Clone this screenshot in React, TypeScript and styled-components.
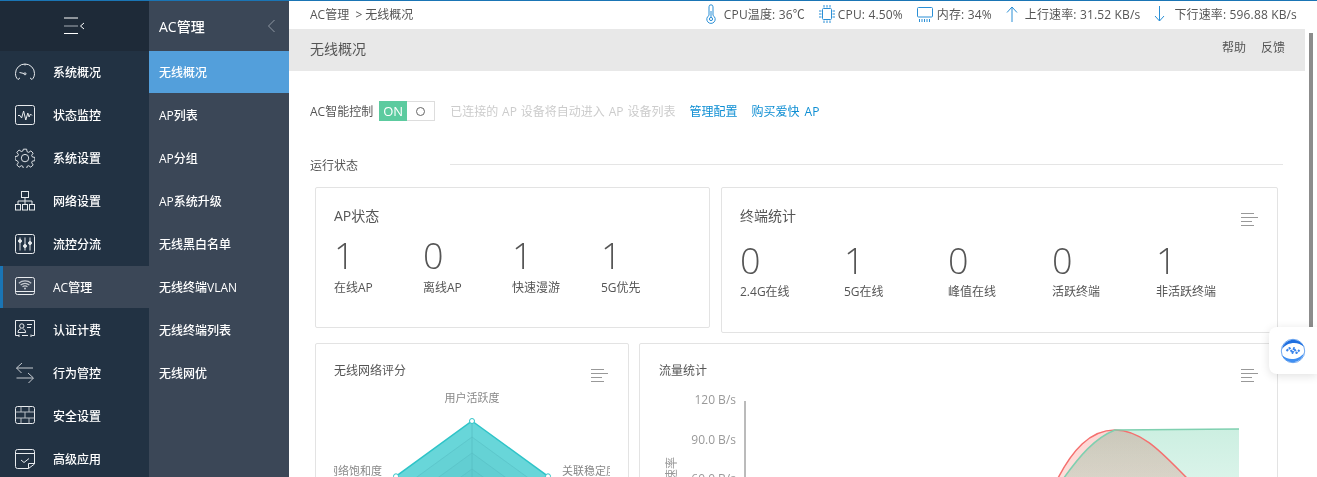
import React from 'react';
import styled, { createGlobalStyle } from 'styled-components';

const GlobalStyle = createGlobalStyle`
	html, body {
		margin: 0;
		padding: 0;
		height: 100%;
		background: #fff;
		overflow: hidden;
	}
	* {
		box-sizing: border-box;
	}
	body {
		font-family: "Open Sans", "Noto Sans CJK SC", sans-serif;
		font-size: 12px;
		color: #555;
	}
`;

const Page = styled.div`
	position: relative;
	display: flex;
	width: 1317px;
	height: 477px;
	overflow: hidden;
	border-top: 1px solid #1a75b5;
`;

const Rail = styled.aside`
	flex: 0 0 149px;
	background: #223243;
`;

const RailHead = styled.div`
	display: flex;
	justify-content: center;
	align-items: center;
	height: 50px;
	background: #1e2a38;
`;

const NavList = styled.nav`
	display: flex;
	flex-direction: column;
	gap: 1px;
`;

const NavItem = styled.div<{ $active?: boolean }>`
	display: flex;
	align-items: center;
	gap: 18px;
	height: 42px;
	padding-left: ${(p) => (p.$active ? '12px' : '15px')};
	color: #fff;
	font-weight: 500;
	background: ${(p) => (p.$active ? '#3b4757' : 'transparent')};
	border-left: ${(p) => (p.$active ? '3px solid #1a75b5' : '0')};
`;

const SubRail = styled.aside`
	flex: 0 0 140px;
	background: #3b4757;
`;

const SubHead = styled.div`
	display: flex;
	justify-content: space-between;
	align-items: center;
	height: 50px;
	padding: 0 10px;
	color: #fff;
	font-size: 14px;
	font-weight: 500;
`;

const SubItem = styled.div<{ $active?: boolean }>`
	display: flex;
	align-items: center;
	height: 42px;
	padding-left: 10px;
	color: #fff;
	font-weight: 500;
	background: ${(p) => (p.$active ? '#539fdb' : 'transparent')};
`;

const Main = styled.main`
	flex: 1;
	min-width: 0;
`;

const TopBar = styled.header`
	display: flex;
	justify-content: space-between;
	align-items: center;
	height: 28px;
	padding: 0 20px 2px 21px;
`;

const Stats = styled.div`
	display: flex;
	align-items: center;
`;

const Stat = styled.span<{ $gap: number }>`
	display: flex;
	align-items: center;
	gap: ${(p) => p.$gap}px;
	margin-left: 14px;
	letter-spacing: 0.15px;
	white-space: nowrap;
`;

const TitleBar = styled.div`
	display: flex;
	justify-content: space-between;
	align-items: center;
	width: 1016px;
	height: 42px;
	padding: 0 20px 5px 21px;
	background: #e8e8e8;
	font-size: 14px;
`;

const TitleLinks = styled.div`
	display: flex;
	gap: 15px;
	margin-bottom: 2px;
	font-size: 12px;
`;

const Content = styled.div`
	padding: 30px 0 0 21px;
	width: 1016px;
`;

const ControlRow = styled.div`
	display: flex;
	align-items: center;
	height: 20px;
`;

const Toggle = styled.div`
	display: flex;
	width: 56px;
	height: 20px;
	margin: 0 15px 0 6px;
	border: 1px solid #ddd;
`;

const ToggleOn = styled.span`
	display: flex;
	justify-content: center;
	align-items: center;
	width: 28px;
	margin: -1px 0 -1px -1px;
	color: #fff;
	font-size: 13px;
	background: #5ccb9f;
`;

const ToggleOff = styled.span`
	flex: 1;
	display: flex;
	justify-content: center;
	align-items: center;
`;

const ToggleDot = styled.i`
	width: 9px;
	height: 9px;
	border: 1px solid #666;
	border-radius: 50%;
`;

const Hint = styled.span`
	margin-right: 14px;
	color: #ccc;
	word-spacing: 0.8px;
`;

const Link = styled.a`
	margin-right: 14px;
	color: #0e8ed3;
	word-spacing: 2px;
`;

const Section = styled.div`
	display: flex;
	align-items: center;
	height: 16px;
	margin-top: 36px;
	width: 973px;
`;

const SectionRule = styled.div`
	flex: 1;
	height: 1px;
	margin: -2px 0 0 92px;
	background: #e5e5e5;
`;

const CardRow = styled.div<{ $top: number; $gap: number }>`
	display: flex;
	align-items: flex-start;
	gap: ${(p) => p.$gap}px;
	margin: ${(p) => p.$top}px 0 0 5px;
`;

const Card = styled.section<{ $w: number; $h: number; $pl?: number; $pr?: number }>`
	flex: 0 0 ${(p) => p.$w}px;
	min-width: 0;
	height: ${(p) => p.$h}px;
	padding: 0 ${(p) => p.$pr ?? 19}px 0 ${(p) => p.$pl ?? 18}px;
	border: 1px solid #e3e3e3;
	border-radius: 2px;
`;

const CardHead = styled.div<{ $top: number; $px?: number }>`
	display: flex;
	justify-content: space-between;
	align-items: flex-start;
	padding: ${(p) => p.$top}px ${(p) => p.$px ?? 0}px 0;
`;

const CardTitle = styled.h3<{ $size: number }>`
	margin: 0;
	font-size: ${(p) => p.$size}px;
	font-weight: 400;
	line-height: 16px;
	color: #555;
`;

const StatRow = styled.div<{ $top: number }>`
	display: flex;
	margin-top: ${(p) => p.$top}px;
`;

const StatCol = styled.div<{ $w: number }>`
	flex: 0 0 ${(p) => p.$w}px;
`;

const StatNum = styled.div`
	font-size: 36px;
	font-weight: 300;
	line-height: 40px;
	color: #555;
`;

const StatLabel = styled.div<{ $top: number }>`
	margin-top: ${(p) => p.$top}px;
	line-height: 16px;
`;

const MenuIconWrap = styled.svg<{ $top: number }>`
	display: block;
	margin-top: ${(p) => p.$top}px;
`;

const ChartSvg = styled.svg`
	display: block;
	margin-top: 8px;
`;

const RedArea = styled.path`
	mix-blend-mode: multiply;
`;

const Scrollbar = styled.div`
	position: absolute;
	top: 32px;
	left: 1309px;
	width: 4px;
	height: 310px;
	background: #8c8c8c;
`;

const FloatButton = styled.div`
	position: absolute;
	top: 326px;
	left: 1269px;
	display: flex;
	justify-content: center;
	align-items: center;
	width: 48px;
	height: 47px;
	background: #fff;
	border-radius: 8px 0 0 8px;
	box-shadow: 0 2px 10px rgba(0, 0, 0, 0.12);
`;

type IconProps = { children: React.ReactNode };

const NavIcon = ({ children }: IconProps) => (
	<svg width="20" height="20" viewBox="0 0 20 20" fill="none" stroke="#e8ebee" strokeWidth="1" style={{ flex: 'none' }}>
		{children}
	</svg>
);

const icons: Record<string, React.ReactNode> = {
	gauge: (
		<>
			<path d="M3 17.5C1.2 16 .5 13.8.5 11.5a9.5 9.5 0 0 1 19 0c0 2.3-.8 4.5-2.5 6" />
			<path d="M4.5 10.5l4.5 1" />
			<circle cx="10" cy="11.8" r="1" />
			<path d="M3 17.5l2-1.6M17 17.5l-2-1.6M10 2v1.5" />
		</>
	),
	pulse: (
		<>
			<rect x=".5" y=".5" width="19" height="19" rx="2" />
			<path d="M3 10.5h2l1.6 2.5 2-7 2.2 9 2-7 1.3 4 1.4-3 1.5 1.5" />
		</>
	),
	gear: (
		<path d="M8.3.7h3.4l.5 2.7 1.7.7 2.3-1.6 2.4 2.4-1.6 2.3.7 1.7 2.7.5v3.4l-2.7.5-.7 1.7 1.6 2.3-2.4 2.4-2.3-1.6-1.7.7-.5 2.7H8.3l-.5-2.7-1.7-.7-2.3 1.6-2.4-2.4 1.6-2.3-.7-1.7L-.4 11.9V8.5l2.7-.5.7-1.7L1.4 4l2.4-2.4 2.3 1.6 1.7-.7zM10 6.2a3.9 3.9 0 1 0 0 7.8 3.9 3.9 0 0 0 0-7.8z" transform="translate(.5 .5) scale(.95)" />
	),
	network: (
		<>
			<rect x="6.5" y=".5" width="7" height="6" />
			<rect x=".5" y="13.5" width="5" height="5.5" />
			<rect x="7.5" y="13.5" width="5" height="5.5" />
			<rect x="14.5" y="13.5" width="5" height="5.5" />
			<path d="M10 6.5v7M3 13.5V10h14v3.5" />
		</>
	),
	sliders: (
		<>
			<rect x=".5" y=".5" width="19" height="19" rx="2" />
			<path d="M5 3.5v13M10 3.5v13M15 3.5v13" strokeWidth="1.4" stroke="#a9b0b8" />
			<circle cx="5" cy="7" r="1.5" fill="#e8ebee" />
			<circle cx="10" cy="12" r="1.5" fill="#e8ebee" />
			<circle cx="15" cy="9" r="1.5" fill="#e8ebee" />
		</>
	),
	wifi: (
		<>
			<rect x=".5" y=".5" width="19" height="17" rx="2" />
			<path d="M.5 14.5h19" />
			<path d="M3.8 6.2c3.6-3 8.8-3 12.4 0M5.6 8c2.6-2 6.2-2 8.8 0M7.5 9.8c1.5-1 3.5-1 5 0" strokeWidth="1.2" stroke="#c6cbd1" />
			<circle cx="10" cy="11.6" r="1" fill="#c6cbd1" stroke="none" />
		</>
	),
	badge: (
		<>
			<path d="M.5 15.5V.5h19v15h-3M13 15.5H7M4 15.5H.5M4 14.5v2.5M16 14.5v2.5" />
			<circle cx="6.8" cy="6" r="2.2" />
			<path d="M3 12.5c0-2.5 1.5-3.4 2.8-3.6M10.6 12.5c0-2.5-1.5-3.4-2.8-3.6M3 12.5h7.6" />
			<path d="M12 4.5h5M12 7.5h4" />
		</>
	),
	swap: (
		<g stroke="#c6cbd1">
			<path d="M1.5 5h16.5M7 0L1.5 5l5 5" />
			<path d="M1.5 15h16.5M13 10l5.5 5-5 5" />
		</g>
	),
	brick: (
		<>
			<rect x=".5" y=".5" width="19" height="17" rx="2" />
			<path d="M.5 6h19M.5 12h19M6 .5V6M14 .5V6M10 6v6M6 12v5.5M14 12v5.5" stroke="#b8bec5" />
		</>
	),
	note: (
		<>
			<path d="M13.5 19.5h-11a2 2 0 0 1-2-2v-15a2 2 0 0 1 2-2h15a2 2 0 0 1 2 2v12.5z" />
			<path d="M.5 4.5h19" />
			<path d="M6 11l3 2.5 5-4" />
			<path d="M13.5 19.5v-5h6" />
		</>
	),
};

const navItems = [
	['gauge', '系统概况'],
	['pulse', '状态监控'],
	['gear', '系统设置'],
	['network', '网络设置'],
	['sliders', '流控分流'],
	['wifi', 'AC管理'],
	['badge', '认证计费'],
	['swap', '行为管控'],
	['brick', '安全设置'],
	['note', '高级应用'],
];

const subItems = ['无线概况', 'AP列表', 'AP分组', 'AP系统升级', '无线黑白名单', '无线终端VLAN', '无线终端列表', '无线网优'];

const Hamburger = () => (
	<svg width="20" height="18" viewBox="0 0 20 18" fill="none" stroke="#fff" style={{ marginRight: 1 }}>
		<path d="M0 1h14M0 16.5h14" />
		<path d="M0 9h14" stroke="#a6adb5" />
		<path d="M20 6l-3.5 3 3.5 3" />
	</svg>
);

const MenuIcon = ({ top }: { top: number }) => (
	<MenuIconWrap $top={top} width="18" height="13" viewBox="0 0 18 13" stroke="#999" fill="none">
		<path d="M1 .5h13M1 4.5h17M1 8.5h11M1 12.5h13" />
	</MenuIconWrap>
);

const pentagon = (r: number) =>
	Array.from({ length: 5 }, (_, i) => {
		const a = (i * 2 * Math.PI) / 5;
		return `${138 + r * Math.sin(a)},${111 - r * Math.cos(a)}`;
	}).join(' ');

const RadarChart = () => (
	<ChartSvg width="276" height="180" viewBox="0 0 276 180">
		<polygon points={pentagon(80)} fill="#68d6d9" stroke="#2fc4c8" strokeWidth="1.5" />
		{[64, 48, 32, 16].map((r) => (
			<polygon key={r} points={pentagon(r)} fill="#56b9c0" fillOpacity="0.12" stroke="#56bcc2" strokeOpacity="0.5" />
		))}
		{[0, 1, 2, 3, 4].map((i) => {
			const a = (i * 2 * Math.PI) / 5;
			return <line key={i} x1="138" y1="111" x2={138 + 80 * Math.sin(a)} y2={111 - 80 * Math.cos(a)} stroke="#56bcc2" strokeOpacity="0.7" />;
		})}
		<circle cx="138" cy="31" r="2.5" fill="#fff" stroke="#2fc4c8" />
		<circle cx="214" cy="86.3" r="2.5" fill="#fff" stroke="#2fc4c8" />
		<circle cx="62" cy="86.3" r="2.5" fill="#fff" stroke="#2fc4c8" />
		<text x="138" y="12" textAnchor="middle" fontSize="11" fill="#888">用户活跃度</text>
		<text x="48" y="85" textAnchor="end" fontSize="11" fill="#888">网络饱和度</text>
		<text x="228" y="85" fontSize="11" fill="#888">关联稳定度</text>
	</ChartSvg>
);

const TrafficChart = () => (
	<ChartSvg width="637" height="130" viewBox="0 0 637 130">
		<defs>
			<linearGradient id="greenFill" x1="0" y1="0" x2="0" y2="1">
				<stop offset="0" stopColor="#ccefe1" />
				<stop offset="1" stopColor="#e6f7f1" />
			</linearGradient>
			<linearGradient id="redFill" x1="0" y1="0" x2="0" y2="1">
				<stop offset="0" stopColor="#fdd6d4" />
				<stop offset="1" stopColor="#fee6e0" />
			</linearGradient>
		</defs>
		<path d="M105 11v119" stroke="#777" />
		<g fontSize="12" fill="#999" textAnchor="end">
			<text x="96" y="14">120 B/s</text>
			<text x="96" y="54">90.0 B/s</text>
			<text x="96" y="93">60.0 B/s</text>
		</g>
		<text transform="translate(36 67) rotate(-90)" fontSize="12" fill="#999" textAnchor="end">速率</text>
		<path d="M421 92C440 65 455 48 475 40L599 39V130H421z" fill="url(#greenFill)" />
		<RedArea d="M416 92C432 60 450 40 475 40C505 40 528 70 551 92V130H416z" fill="url(#redFill)" />
		<path d="M416 92C432 60 450 40 475 40C505 40 528 70 551 92" fill="none" stroke="#f5706f" strokeWidth="1.5" />
		<path d="M421 92C440 65 455 48 475 40L599 39" fill="none" stroke="#7fd0b0" strokeWidth="1.5" />
	</ChartSvg>
);

const App: React.FC = () => {
	return (
		<Page>
			<GlobalStyle />
			<Rail>
				<RailHead>
					<Hamburger />
				</RailHead>
				<NavList>
					{navItems.map(([icon, label]) => (
						<NavItem key={label} $active={label === 'AC管理'}>
							<NavIcon>{icons[icon]}</NavIcon>
							{label}
						</NavItem>
					))}
				</NavList>
			</Rail>
			<SubRail>
				<SubHead>
					AC管理
					<svg width="9" height="14" viewBox="0 0 9 14" fill="none" stroke="#8f98a3" style={{ marginRight: 3 }}>
						<path d="M7.5 1L1.5 7l6 6" />
					</svg>
				</SubHead>
				<NavList>
					{subItems.map((label, i) => (
						<SubItem key={label} $active={i === 0}>
							{label}
						</SubItem>
					))}
				</NavList>
			</SubRail>
			<Main>
				<TopBar>
					<span>AC管理 &nbsp;&gt; 无线概况</span>
					<Stats>
						<Stat $gap={7}>
							<svg width="12" height="20" viewBox="0 0 12 20" fill="none" stroke="#2a8fd6">
								<path d="M4 11.5V2.8a2 2 0 0 1 4 0v8.7a4.2 4.2 0 1 1-4 0z" />
								<circle cx="6" cy="15" r="1.6" />
								<path d="M6 7v6" />
							</svg>
							CPU温度: 36℃
						</Stat>
						<Stat $gap={3}>
							<svg width="16" height="18" viewBox="0 0 16 18" fill="none" stroke="#2a8fd6">
								<rect x="3.5" y="3.5" width="9" height="11" rx="1" />
								<path d="M5 0v2.5M8 0v2.5M11 0v2.5M5 15.5V18M8 15.5V18M11 15.5V18M0 6h2.5M0 9h2.5M0 12h2.5M13.5 6H16M13.5 9H16M13.5 12H16" />
							</svg>
							CPU: 4.50%
						</Stat>
						<Stat $gap={4}>
							<svg width="16" height="16" viewBox="0 0 16 16" fill="none" stroke="#2a8fd6">
								<rect x=".5" y="1.5" width="15" height="9.5" rx="1" />
								<path d="M2.5 13v3M5 13v3M7.5 13v3M10 13v3M12.5 13v3" />
							</svg>
							内存: 34%
						</Stat>
						<Stat $gap={7}>
							<svg width="12" height="16" viewBox="0 0 12 16" fill="none" stroke="#2a8fd6">
								<path d="M6 16V1M1 6.5L6 1l5 5.5" />
							</svg>
							上行速率: 31.52 KB/s
						</Stat>
						<Stat $gap={9}>
							<svg width="11" height="16" viewBox="0 0 11 16" fill="none" stroke="#2a8fd6">
								<path d="M5.5 0v15M1 10l4.5 5L10 10" />
							</svg>
							下行速率: 596.88 KB/s
						</Stat>
					</Stats>
				</TopBar>
				<TitleBar>
					无线概况
					<TitleLinks>
						<span>帮助</span>
						<span>反馈</span>
					</TitleLinks>
				</TitleBar>
				<Content>
					<ControlRow>
						AC智能控制
						<Toggle>
							<ToggleOn>ON</ToggleOn>
							<ToggleOff>
								<ToggleDot />
							</ToggleOff>
						</Toggle>
						<Hint>已连接的 AP 设备将自动进入 AP 设备列表</Hint>
						<Link>管理配置</Link>
						<Link>购买爱快 AP</Link>
					</ControlRow>
					<Section>
						运行状态
						<SectionRule />
					</Section>
					<CardRow $top={14} $gap={11}>
						<Card $w={395} $h={141}>
							<CardHead $top={20}>
								<CardTitle $size={14}>AP状态</CardTitle>
							</CardHead>
							<StatRow $top={12}>
								{[['1', '在线AP'], ['0', '离线AP'], ['1', '快速漫游'], ['1', '5G优先']].map(([n, l]) => (
									<StatCol key={l} $w={89}>
										<StatNum>{n}</StatNum>
										<StatLabel $top={4}>{l}</StatLabel>
									</StatCol>
								))}
							</StatRow>
						</Card>
						<Card $w={557} $h={146}>
							<CardHead $top={20}>
								<CardTitle $size={14}>终端统计</CardTitle>
								<MenuIcon top={5} />
							</CardHead>
							<StatRow $top={15}>
								{[['0', '2.4G在线'], ['1', '5G在线'], ['0', '峰值在线'], ['0', '活跃终端'], ['1', '非活跃终端']].map(([n, l]) => (
									<StatCol key={l} $w={104}>
										<StatNum>{n}</StatNum>
										<StatLabel $top={3}>{l}</StatLabel>
									</StatCol>
								))}
							</StatRow>
						</Card>
					</CardRow>
					<CardRow $top={10} $gap={10}>
						<Card $w={314} $h={300} $pr={20}>
							<CardHead $top={19}>
								<CardTitle $size={12}>无线网络评分</CardTitle>
								<MenuIcon top={6} />
							</CardHead>
							<RadarChart />
						</Card>
						<Card $w={639} $h={300} $pl={0} $pr={0}>
							<CardHead $top={19} $px={19}>
								<CardTitle $size={12}>流量统计</CardTitle>
								<MenuIcon top={6} />
							</CardHead>
							<TrafficChart />
						</Card>
					</CardRow>
				</Content>
			</Main>
			<Scrollbar />
			<FloatButton>
				<svg width="26" height="26" viewBox="0 0 26 26" fill="none">
					<path d="M2 11A11.5 11.5 0 0 1 24 9C18 2.8 7 4 2 11z" fill="#1f6fe0" />
					<path d="M24 15A11.5 11.5 0 0 1 2 17C8 23.2 19 22 24 15z" fill="#3f8ff2" />
					<circle cx="13" cy="13" r="11.7" stroke="#2f7fe8" strokeWidth="0.7" />
					<path d="M6.5 13l3-3 3 5 1.5-5 2.5 5 3-3" stroke="#3b86ec" strokeWidth="2" strokeDasharray="2.4 0.9" strokeLinejoin="round" />
				</svg>
			</FloatButton>
		</Page>
	);
};

export default App;
